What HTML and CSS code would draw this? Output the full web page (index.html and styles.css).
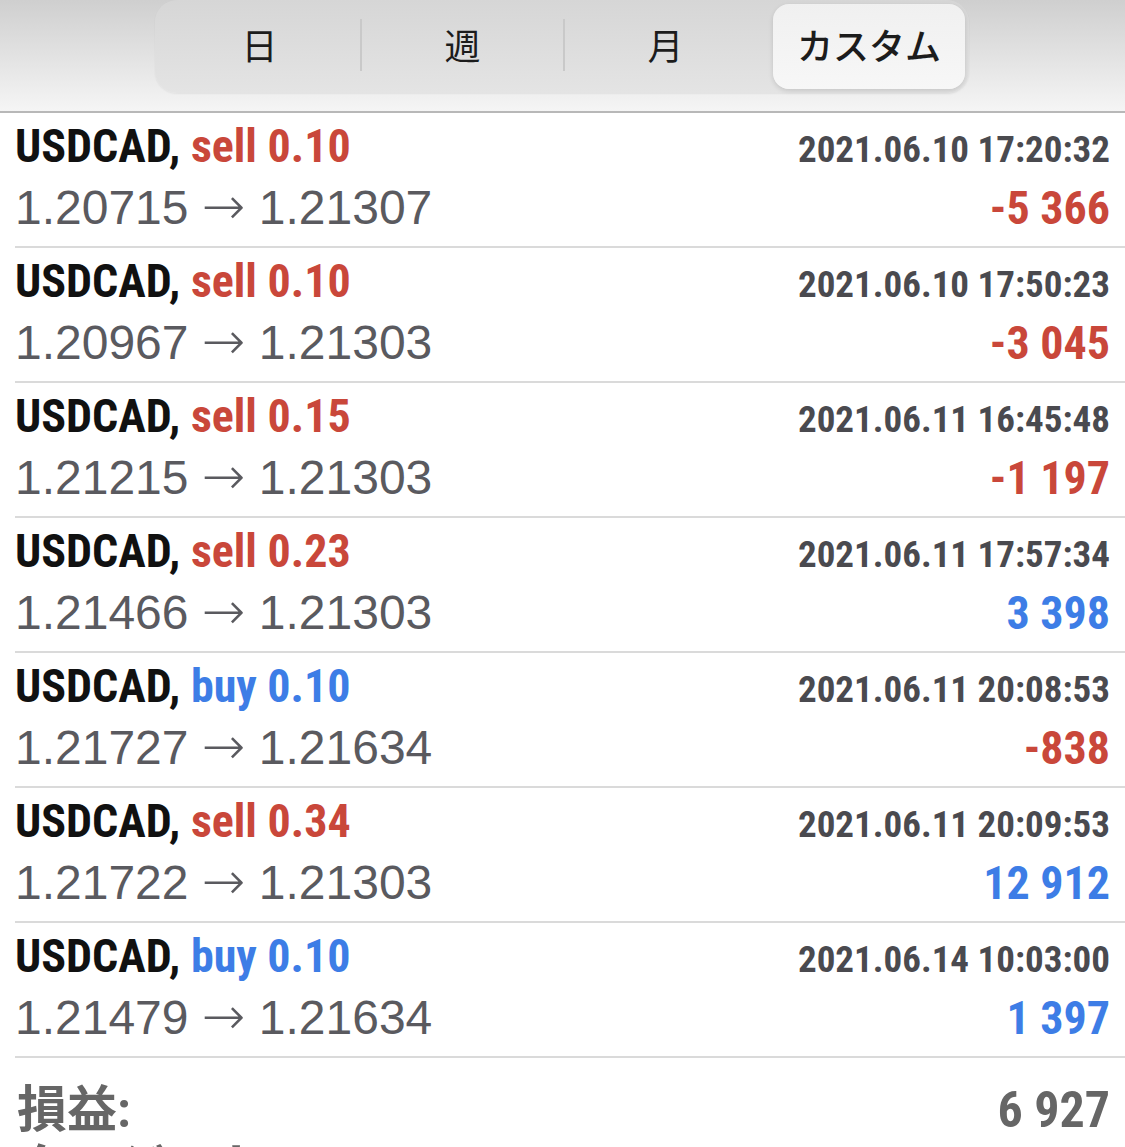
FILE: index.html
```html
<!DOCTYPE html>
<html lang="ja">
<head>
	<meta charset="UTF-8">
	<title>履歴</title>
	<link rel="stylesheet" href="styles.css">
</head>
<body>
	<div class="header">
		<div class="segmented">
			<div class="seg">日</div>
			<div class="divider"></div>
			<div class="seg">週</div>
			<div class="divider"></div>
			<div class="seg">月</div>
			<div class="seg active">カスタム</div>
		</div>
	</div>

	<ul class="deals">
		<li class="deal">
			<div class="line">
				<span class="symbol">USDCAD, <span class="sell">sell 0.10</span></span>
				<span class="time">2021.06.10 17:20:32</span>
			</div>
			<div class="line">
				<span class="prices">1.20715 <span class="arrow">→</span> 1.21307</span>
				<span class="profit loss">-5 366</span>
			</div>
		</li>
		<li class="deal">
			<div class="line">
				<span class="symbol">USDCAD, <span class="sell">sell 0.10</span></span>
				<span class="time">2021.06.10 17:50:23</span>
			</div>
			<div class="line">
				<span class="prices">1.20967 <span class="arrow">→</span> 1.21303</span>
				<span class="profit loss">-3 045</span>
			</div>
		</li>
		<li class="deal">
			<div class="line">
				<span class="symbol">USDCAD, <span class="sell">sell 0.15</span></span>
				<span class="time">2021.06.11 16:45:48</span>
			</div>
			<div class="line">
				<span class="prices">1.21215 <span class="arrow">→</span> 1.21303</span>
				<span class="profit loss">-1 197</span>
			</div>
		</li>
		<li class="deal">
			<div class="line">
				<span class="symbol">USDCAD, <span class="sell">sell 0.23</span></span>
				<span class="time">2021.06.11 17:57:34</span>
			</div>
			<div class="line">
				<span class="prices">1.21466 <span class="arrow">→</span> 1.21303</span>
				<span class="profit gain">3 398</span>
			</div>
		</li>
		<li class="deal">
			<div class="line">
				<span class="symbol">USDCAD, <span class="buy">buy 0.10</span></span>
				<span class="time">2021.06.11 20:08:53</span>
			</div>
			<div class="line">
				<span class="prices">1.21727 <span class="arrow">→</span> 1.21634</span>
				<span class="profit loss">-838</span>
			</div>
		</li>
		<li class="deal">
			<div class="line">
				<span class="symbol">USDCAD, <span class="sell">sell 0.34</span></span>
				<span class="time">2021.06.11 20:09:53</span>
			</div>
			<div class="line">
				<span class="prices">1.21722 <span class="arrow">→</span> 1.21303</span>
				<span class="profit gain">12 912</span>
			</div>
		</li>
		<li class="deal">
			<div class="line">
				<span class="symbol">USDCAD, <span class="buy">buy 0.10</span></span>
				<span class="time">2021.06.14 10:03:00</span>
			</div>
			<div class="line">
				<span class="prices">1.21479 <span class="arrow">→</span> 1.21634</span>
				<span class="profit gain">1 397</span>
			</div>
		</li>
	</ul>

	<div class="summary">
		<div class="sum_row">
			<span>損益:</span>
			<span>6 927</span>
		</div>
		<div class="sum_row">
			<span>クレジット:</span>
		</div>
	</div>
</body>
</html>
```

FILE: styles.css
```css
html,body{
	margin:0;
	height:1147px;
	overflow:hidden;
}
body{
	background:#fff;
	font-family:"Liberation Sans","Noto Sans CJK JP",sans-serif;
	color:#111;
}
ul{
	margin:0;
	padding:0;
	list-style:none;
}

/* header with segmented control */
.header{
	height:111px;
	background:linear-gradient(#cfcfcf,#f5f5f5);
	border-bottom:2px solid #b8b8b8;
	overflow:hidden;
}
.segmented{
	width:806px;
	height:85px;
	margin-left:155px;
	padding:4px;
	display:flex;
	align-items:center;
	background:linear-gradient(#d6d6d6,#e4e4e4);
	border-radius:22px;
	box-shadow:0 1px 2px rgba(0,0,0,.06);
}
.seg{
	width:201px;
	height:100%;
	padding-bottom:5px;
	box-sizing:border-box;
	display:flex;
	justify-content:center;
	align-items:center;
	font:36px "Noto Sans CJK JP",sans-serif;
	color:#1c1c1c;
}
.seg.active{
	width:192px;
	margin-left:7px;
	background:linear-gradient(#f0f0f0,#f7f7f7);
	border-radius:16px;
	box-shadow:0 2px 5px rgba(0,0,0,.13);
	font-weight:500;
}
.divider{
	width:2px;
	height:52px;
	margin-bottom:4px;
	background:#c9c9c9;
}

/* deal rows */
.deals{
	padding-left:15px;
}
.deal{
	height:126px;
	padding:2px 15px 5px 0;
	border-bottom:2px solid #dadada;
}
.line{
	height:62px;
	line-height:62px;
	display:flex;
	justify-content:space-between;
	align-items:baseline;
	white-space:nowrap;
}
.symbol,.time,.profit,.sum_row{
	font-family:"Roboto Condensed","Liberation Sans","Noto Sans CJK JP",sans-serif;
	font-weight:bold;
}
.symbol{
	font-size:46px;
	color:#111;
}
.sell{
	color:#c9473a;
}
.buy{
	color:#3d7de6;
}
.time{
	font-size:37px;
	color:#4a4a4f;
}
.prices{
	font-size:48px;
	color:#5a5a5f;
}
.arrow{
	font-family:"DejaVu Sans",sans-serif;
	font-size:52px;
	font-weight:200;
	line-height:0;
}
.profit{
	font-size:46px;
}
.loss{
	color:#c9473a;
}
.gain{
	color:#3d7de6;
}

/* totals */
.summary{
	padding:22px 15px 0 17px;
}
.sum_row{
	height:58px;
	line-height:60px;
	display:flex;
	justify-content:space-between;
	align-items:baseline;
	font-size:50px;
	color:#666;
}
```
